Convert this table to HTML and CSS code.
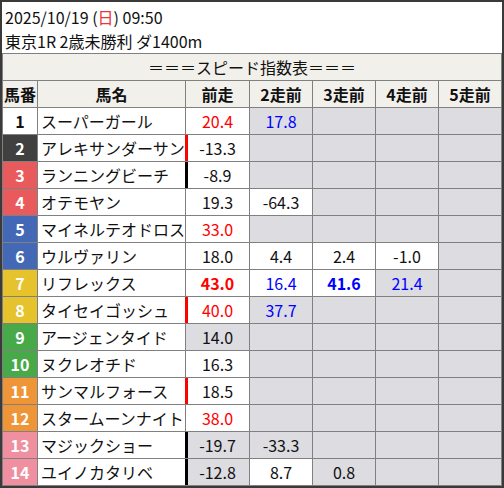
FILE: index.html
```html
<!DOCTYPE html>
<html lang="ja">
<head>
<meta charset="utf-8">
<link rel="stylesheet" href="styles.css">
</head>
<body>
<div class="frame">
  <div class="info">
    <div class="line">2025/10/19 (<span class="sun">日</span>) 09:50</div>
    <div class="line">東京1R 2歳未勝利 ダ1400m</div>
  </div>
  <div class="grid">
    <div class="title">＝＝＝スピード指数表＝＝＝</div>
    <div class="hd">馬番</div><div class="hd">馬名</div><div class="hd">前走</div><div class="hd">2走前</div><div class="hd">3走前</div><div class="hd">4走前</div><div class="hd">5走前</div>

    <div class="no w1">1</div><div class="name">スーパーガール</div><div class="v red">20.4</div><div class="v g blue">17.8</div><div class="v g"></div><div class="v g"></div><div class="v g"></div>

    <div class="no w2">2</div><div class="name">アレキサンダーサン</div><div class="v mk-red">-13.3</div><div class="v g"></div><div class="v g"></div><div class="v g"></div><div class="v g"></div>

    <div class="no w3">3</div><div class="name">ランニングビーチ</div><div class="v mk-black">-8.9</div><div class="v g"></div><div class="v g"></div><div class="v g"></div><div class="v g"></div>

    <div class="no w3">4</div><div class="name">オテモヤン</div><div class="v">19.3</div><div class="v">-64.3</div><div class="v g"></div><div class="v g"></div><div class="v g"></div>

    <div class="no w5">5</div><div class="name">マイネルテオドロス</div><div class="v red">33.0</div><div class="v g"></div><div class="v g"></div><div class="v g"></div><div class="v g"></div>

    <div class="no w5">6</div><div class="name">ウルヴァリン</div><div class="v">18.0</div><div class="v">4.4</div><div class="v">2.4</div><div class="v">-1.0</div><div class="v g"></div>

    <div class="no w7">7</div><div class="name">リフレックス</div><div class="v red b">43.0</div><div class="v blue">16.4</div><div class="v blue b">41.6</div><div class="v g blue">21.4</div><div class="v g"></div>

    <div class="no w7">8</div><div class="name">タイセイゴッシュ</div><div class="v red mk-red">40.0</div><div class="v g blue">37.7</div><div class="v g"></div><div class="v g"></div><div class="v g"></div>

    <div class="no w9">9</div><div class="name">アージェンタイド</div><div class="v g">14.0</div><div class="v g"></div><div class="v g"></div><div class="v g"></div><div class="v g"></div>

    <div class="no w9">10</div><div class="name">ヌクレオチド</div><div class="v">16.3</div><div class="v g"></div><div class="v g"></div><div class="v g"></div><div class="v g"></div>

    <div class="no w11">11</div><div class="name">サンマルフォース</div><div class="v mk-red">18.5</div><div class="v g"></div><div class="v g"></div><div class="v g"></div><div class="v g"></div>

    <div class="no w11">12</div><div class="name">スタームーンナイト</div><div class="v red">38.0</div><div class="v g"></div><div class="v g"></div><div class="v g"></div><div class="v g"></div>

    <div class="no w13">13</div><div class="name">マジックショー</div><div class="v g mk-black">-19.7</div><div class="v g">-33.3</div><div class="v g"></div><div class="v g"></div><div class="v g"></div>

    <div class="no w13">14</div><div class="name">ユイノカタリベ</div><div class="v g mk-black">-12.8</div><div class="v">8.7</div><div class="v g">0.8</div><div class="v g"></div><div class="v g"></div>
  </div>
</div>
</body>
</html>
```
FILE: styles.css
```css
html, body {
  margin: 0;
  padding: 0;
  background: #ffffff;
}
body {
  font-family: "Noto Sans CJK JP", "Noto Sans", sans-serif;
  font-size: 16px;
  color: #111;
}
.frame {
  width: 504px;
  height: 488px;
  box-sizing: border-box;
  border: 2px solid #3a3a3a;
  background: #ffffff;
  display: flex;
  flex-direction: column;
}
.info {
  height: 51px;
  box-sizing: border-box;
  padding: 3px 0 0 3px;
}
.line {
  height: 24px;
  line-height: 24px;
  white-space: nowrap;
}
.sun {
  color: #e8343a;
}
.grid {
  display: grid;
  grid-template-columns: 34px 147px 63px 62px 62px 62px 62px;
  grid-template-rows: 26px 26px repeat(14, 26px);
  gap: 1px;
  padding: 1px;
  background: #808080;
}
.grid > div {
  display: flex;
  align-items: center;
  justify-content: center;
  line-height: 1;
  white-space: nowrap;
  overflow: visible;
}
.title {
  grid-column: 1 / -1;
  background: #f2f0eb;
}
.hd {
  background: #f2f0eb;
  font-weight: bold;
}
.no {
  font-weight: bold;
  color: #ffffff;
}
.w1 { background: #ffffff; color: #111; }
.w2 { background: #404040; }
.w3 { background: #e85a5c; }
.w5 { background: #4369b6; }
.w7 { background: #e6c22c; }
.w9 { background: #48a948; }
.w11 { background: #ee9538; }
.w13 { background: #f08fa0; }
.grid > .name {
  justify-content: flex-start;
  padding-left: 3px;
  background: #ffffff;
}
.v {
  background: #ffffff;
}
.grid > .g {
  background: #dcdce1;
}
.red { color: #ff0000; }
.blue { color: #0000ff; }
.b { font-weight: bold; }
.mk-red {
  box-shadow: -1px 0 0 #ff0000, inset 2px 0 0 #ff0000;
}
.mk-black {
  box-shadow: -1px 0 0 #000000, inset 2px 0 0 #000000;
}
```
